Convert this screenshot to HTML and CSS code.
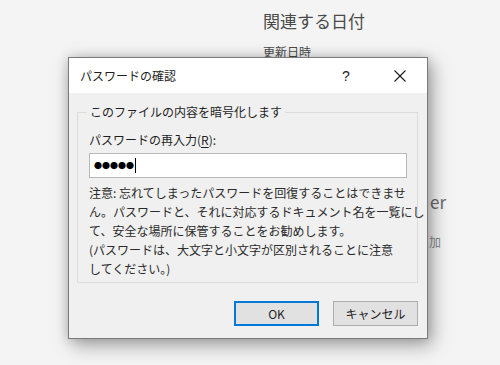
FILE: index.html
```html
<!DOCTYPE html>
<html lang="ja">
<head>
  <meta charset="UTF-8">
  <title>パスワードの確認</title>
  <link rel="stylesheet" href="styles.css">
</head>
<body>

  <div class="backdrop">
    <div class="side">
      <h2 class="side-title">関連する日付</h2>
      <div class="side-item">更新日時</div>
      <div class="side-owner">er</div>
      <div class="side-add">加</div>
    </div>
  </div>

  <div class="dialog">
    <div class="titlebar">
      <span class="title">パスワードの確認</span>
      <span class="tb-btn">?</span>
      <span class="tb-btn">
        <svg width="12" height="12" viewBox="0 0 12 12">
          <path d="M0.5 0.5 L11.5 11.5 M11.5 0.5 L0.5 11.5" stroke="#1a1a1a" stroke-width="1.1" fill="none"/>
        </svg>
      </span>
    </div>

    <div class="body">
      <fieldset class="group">
        <legend>このファイルの内容を暗号化します</legend>
        <div class="label">パスワードの再入力(<u>R</u>):</div>
        <div class="input"><span class="dots">●●●●●</span><span class="caret"></span></div>
        <p class="note">注意: 忘れてしまったパスワードを回復することはできませ<br>ん。パスワードと、それに対応するドキュメント名を一覧にし<br>て、安全な場所に保管することをお勧めします。<br>(パスワードは、大文字と小文字が区別されることに注意<br>してください。)</p>
      </fieldset>

      <div class="actions">
        <button class="btn btn-default">OK</button>
        <button class="btn">キャンセル</button>
      </div>
    </div>
  </div>

</body>
</html>
```

FILE: styles.css
```css
:root {
  --face: #f0f0f0;
  --text: #1e1e1e;
  --accent: #0078d7;
  --btn-bg: #e1e1e1;
  --btn-border: #adadad;
}

html, body {
  margin: 0;
  padding: 0;
}

body {
  width: 500px;
  height: 365px;
  overflow: hidden;
  background: #f4f4f4;
  font-family: "Noto Sans CJK JP", "Noto Sans", sans-serif;
  color: var(--text);
  position: relative;
}

.backdrop {
  height: 100%;
}

.side {
  padding-left: 263px;
  padding-top: 9px;
  color: #4a4a4a;
}

.side-title {
  margin: 0;
  font-size: 17px;
  font-weight: normal;
  line-height: 24px;
}

.side-item {
  margin-top: 10px;
  font-size: 12px;
  line-height: 18px;
}

.side-owner {
  margin-top: 130px;
  margin-left: 167px;
  font-size: 17px;
  line-height: 22px;
  color: #6a6a6a;
}

.side-add {
  margin-top: 20px;
  margin-left: 166px;
  font-size: 12px;
  line-height: 18px;
  color: #8a8a8a;
}

.dialog {
  position: absolute;
  left: 68px;
  top: 57px;
  width: 360px;
  height: 282px;
  box-sizing: border-box;
  border: 1px solid #7a7a7a;
  background: var(--face);
  box-shadow: 4px 6px 18px rgba(0, 0, 0, 0.35), 0 0 10px rgba(0, 0, 0, 0.15);
  display: flex;
  flex-direction: column;
}

.titlebar {
  height: 35px;
  background: #fff;
  display: flex;
  align-items: center;
  font-size: 12px;
}

.title {
  flex: 1;
  padding-left: 11px;
}

.tb-btn {
  width: 54px;
  height: 35px;
  display: flex;
  align-items: center;
  justify-content: center;
  font-family: "Liberation Sans", sans-serif;
  font-size: 14px;
}

.body {
  flex: 1;
  padding: 10px 9px 12px 8px;
  display: flex;
  flex-direction: column;
}

.group {
  margin: 0;
  padding: 0 10px 3px 11px;
  border: 1px solid #dcdcdc;
  height: 180px;
  box-sizing: border-box;
  min-width: 0;
}

.group legend {
  padding: 0 3px;
  margin-left: -2px;
  font-size: 12px;
  line-height: 18px;
}

.label {
  margin-top: 10px;
  font-size: 12px;
  line-height: 18px;
}

.label u {
  text-underline-offset: 2px;
}

.input {
  margin-top: 4px;
  height: 25px;
  box-sizing: border-box;
  border: 1px solid #b9b9b9;
  background: #fff;
  display: flex;
  align-items: center;
  padding-left: 4px;
}

.dots {
  font-size: 8px;
  letter-spacing: 0;
  color: #000;
}

.caret {
  width: 1px;
  height: 15px;
  background: #000;
  margin-left: 1px;
}

.note {
  margin: 5px 0 0;
  font-size: 12px;
  line-height: 19px;
  white-space: nowrap;
  color: #2a2a2a;
}

.actions {
  margin-top: 18px;
  display: flex;
  justify-content: flex-end;
  gap: 14px;
}

.btn {
  width: 85px;
  height: 25px;
  box-sizing: border-box;
  background: var(--btn-bg);
  border: 1px solid var(--btn-border);
  font-family: inherit;
  font-size: 12px;
  color: var(--text);
  padding: 0;
}

.btn-default {
  border: 2px solid var(--accent);
}
```
